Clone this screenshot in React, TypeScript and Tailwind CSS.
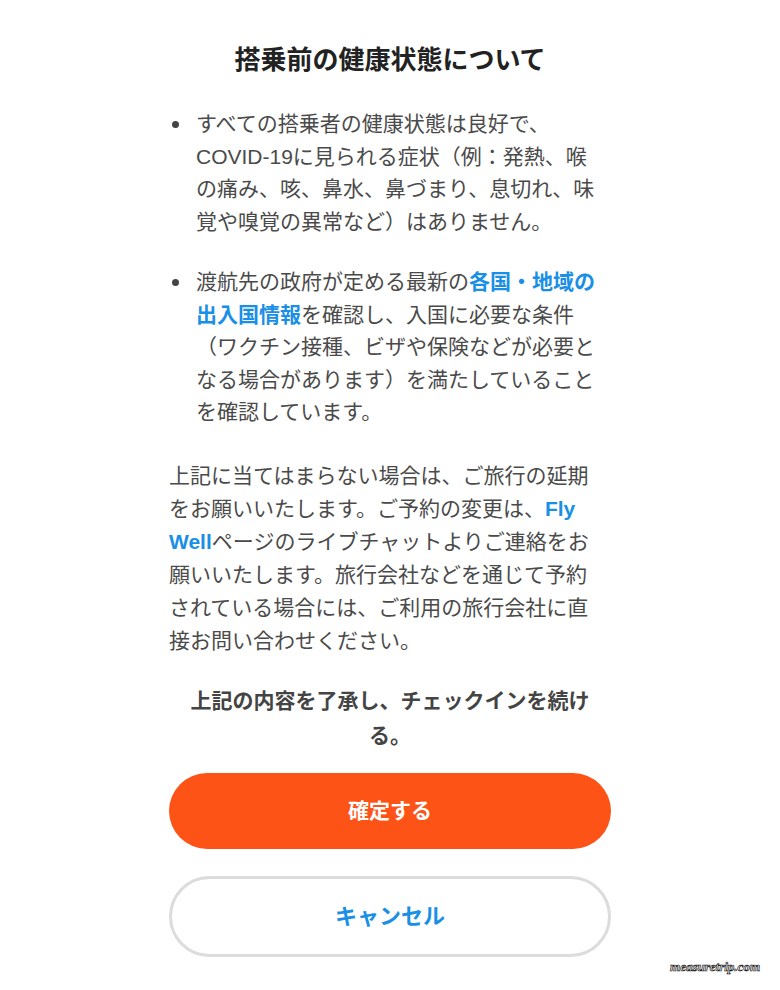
const FONT = '"Liberation Sans", "Noto Sans CJK JP", sans-serif';

function Link({ children }: { children: React.ReactNode }) {
  return <span className="font-bold text-[#1a8fe6]">{children}</span>;
}

export default function App() {
  return (
    <div
      className="relative min-h-[990px] w-[780px] bg-white text-[#4a4a4a]"
      style={{ fontFamily: FONT }}
    >
      <div className="mx-auto flex w-[442px] flex-col pt-[42px]">
        {/* Title */}
        <h1 className="whitespace-nowrap text-center text-[26px] font-bold leading-[36px] text-[#222]">
          搭乗前の健康状態について
        </h1>

        {/* Conditions */}
        <ul className="mt-[30px] space-y-[28px] pl-[27px] text-[21px] leading-[32.5px]">
          <li className="relative whitespace-nowrap">
            <span className="absolute left-[-24px] top-[13px] h-[7px] w-[7px] rounded-full bg-[#444]" />
            すべての搭乗者の健康状態は良好で、
            <br />
            COVID-19に見られる症状（例：発熱、喉
            <br />
            の痛み、咳、鼻水、鼻づまり、息切れ、味
            <br />
            覚や嗅覚の異常など）はありません。
          </li>
          <li className="relative whitespace-nowrap">
            <span className="absolute left-[-24px] top-[13px] h-[7px] w-[7px] rounded-full bg-[#444]" />
            渡航先の政府が定める最新の<Link>各国・地域の</Link>
            <br />
            <Link>出入国情報</Link>を確認し、入国に必要な条件
            <br />
            （ワクチン接種、ビザや保険などが必要と
            <br />
            なる場合があります）を満たしていること
            <br />
            を確認しています。
          </li>
        </ul>

        {/* Notice */}
        <p className="mt-[30px] whitespace-nowrap text-[21px] leading-[33px]">
          上記に当てはまらない場合は、ご旅行の延期
          <br />
          をお願いいたします。ご予約の変更は、<Link>Fly</Link>
          <br />
          <Link>Well</Link>ページのライブチャットよりご連絡をお
          <br />
          願いいたします。旅行会社などを通じて予約
          <br />
          されている場合には、ご利用の旅行会社に直
          <br />
          接お問い合わせください。
        </p>

        <p className="mt-[26px] whitespace-nowrap text-center text-[21px] font-bold leading-[35px] text-[#444]">
          上記の内容を了承し、チェックインを続け
          <br />
          る。
        </p>

        {/* Actions */}
        <div className="mt-[20px] flex flex-col gap-[27px]">
          <button className="h-[76px] w-full rounded-full bg-[#fd5317] text-[21px] font-bold text-white">
            確定する
          </button>
          <button className="h-[81px] w-full rounded-full border-[3px] border-[#dcdcdc] bg-white text-[22px] font-bold text-[#1a8fe6]">
            キャンセル
          </button>
        </div>
      </div>

      {/* Watermark */}
      <span
        className="absolute right-[20px] top-[957px] text-[13px] font-bold italic text-white"
        style={{
          fontFamily: '"Liberation Serif", serif',
          WebkitTextStroke: '0.7px #111',
        }}
      >
        measuretrip.com
      </span>
    </div>
  );
}
